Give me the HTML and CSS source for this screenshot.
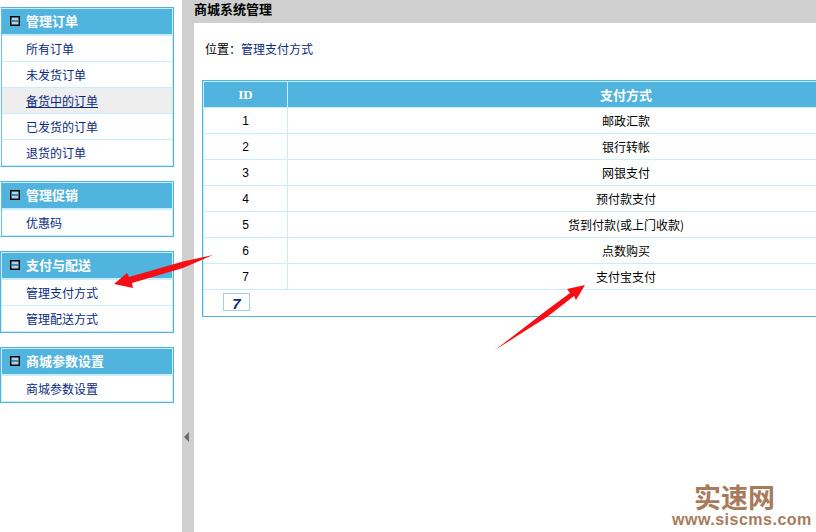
FILE: index.html
```html
<!DOCTYPE html>
<html lang="zh-CN">
<head>
<meta charset="utf-8">
<title>商城系统管理</title>
<link rel="stylesheet" href="styles.css">
</head>
<body>
<div class="page">
  <aside class="sidebar">
    <section class="menu menu-soft">
      <h3 class="menu-head"><svg class="marker" viewBox="0 0 10 10"><rect x="0.75" y="0.75" width="8.5" height="8.5" fill="#a9d6ea" stroke="#000" stroke-width="1.5"/><rect x="2" y="4" width="6" height="2" fill="#3f86b4"/></svg>管理订单</h3>
      <a class="menu-item" href="#">所有订单</a>
      <a class="menu-item" href="#">未发货订单</a>
      <a class="menu-item is-active" href="#">备货中的订单</a>
      <a class="menu-item" href="#">已发货的订单</a>
      <a class="menu-item" href="#">退货的订单</a>
    </section>
    <section class="menu menu-soft">
      <h3 class="menu-head"><svg class="marker" viewBox="0 0 10 10"><rect x="0.75" y="0.75" width="8.5" height="8.5" fill="#a9d6ea" stroke="#000" stroke-width="1.5"/><rect x="2" y="4" width="6" height="2" fill="#3f86b4"/></svg>管理促销</h3>
      <a class="menu-item" href="#">优惠码</a>
    </section>
    <section class="menu">
      <h3 class="menu-head"><svg class="marker" viewBox="0 0 10 10"><rect x="0.75" y="0.75" width="8.5" height="8.5" fill="#a9d6ea" stroke="#000" stroke-width="1.5"/><rect x="2" y="4" width="6" height="2" fill="#3f86b4"/></svg>支付与配送</h3>
      <a class="menu-item" href="#">管理支付方式</a>
      <a class="menu-item" href="#">管理配送方式</a>
    </section>
    <section class="menu">
      <h3 class="menu-head"><svg class="marker" viewBox="0 0 10 10"><rect x="0.75" y="0.75" width="8.5" height="8.5" fill="#a9d6ea" stroke="#000" stroke-width="1.5"/><rect x="2" y="4" width="6" height="2" fill="#3f86b4"/></svg>商城参数设置</h3>
      <a class="menu-item" href="#">商城参数设置</a>
    </section>
  </aside>
  <div class="workspace">
    <span class="collapse-arrow"></span>
    <h1 class="top-title">商城系统管理</h1>
    <main class="content">
      <p class="crumb">位置：<a href="#">管理支付方式</a></p>
      <div class="table-box">
        <table class="pay-table">
          <thead>
            <tr><th class="col-id">ID</th><th>支付方式</th></tr>
          </thead>
          <tbody>
            <tr><td class="col-id">1</td><td>邮政汇款</td></tr>
            <tr><td class="col-id">2</td><td>银行转帐</td></tr>
            <tr><td class="col-id">3</td><td>网银支付</td></tr>
            <tr><td class="col-id">4</td><td>预付款支付</td></tr>
            <tr><td class="col-id">5</td><td>货到付款(或上门收款)</td></tr>
            <tr><td class="col-id">6</td><td>点数购买</td></tr>
            <tr><td class="col-id">7</td><td>支付宝支付</td></tr>
          </tbody>
        </table>
        <div class="pager"><a class="page-num" href="#">7</a></div>
      </div>
    </main>
  </div>
  <svg class="arrows" viewBox="0 0 816 532" aria-hidden="true">
    <polygon points="114,284 127,273 129,277 183,261.5 213,255 183,268 132,283 133,288" fill="#f50f14"/>
    <polygon points="585,285 567,289 570,293 547,310 495,350 547,317 574,296 576,300" fill="#f50f14"/>
  </svg>
  <div class="watermark">
    <div class="wm-name">实速网</div>
    <div class="wm-url">www.siscms.com</div>
  </div>
</div>
</body>
</html>
```
FILE: styles.css
```css
* { box-sizing: border-box; }
html, body { margin: 0; padding: 0; height: 100%; overflow: hidden; background: #fff; }
body { font: 12px/18px "Noto Sans CJK SC", "Liberation Sans", sans-serif; color: #000; }
a { color: #0a2a7e; text-decoration: none; }

.page { position: relative; display: flex; width: 816px; height: 532px; overflow: hidden; }

.sidebar { flex: 0 0 182px; padding-top: 7px; display: flex; flex-direction: column; gap: 14px; }
.menu { width: 174px; border: 1px solid #51b4de; background: #fff; box-shadow: inset 1px 1px 0 #c8eefb, inset -1px 0 0 #c8eefb; padding: 1px 1px 0; }
.menu-soft { border-left-color: #fff; box-shadow: inset 1px 0 0 #62c2ea, inset 0 1px 0 #c8eefb, inset -1px 0 0 #c8eefb; }
.menu-head { display: flex; align-items: center; gap: 6px; height: 27px; margin: 0; padding: 0 0 2px 8px; font-size: 13px; font-weight: bold; line-height: 25px; color: #fff; background: #51b4de; border-bottom: 2px solid #c8eefb; }
.marker { width: 10px; height: 10px; flex: none; }
.menu-item { display: block; height: 26px; padding-left: 24px; line-height: 25px; border-bottom: 1px solid #c8eefb; }
.menu-item.is-active { background: #eeeeee; text-decoration: underline; }

.workspace { position: relative; flex: 1; min-width: 0; display: flex; flex-direction: column; padding-left: 12px; background: #cfcfcf; }
.collapse-arrow { position: absolute; left: 2px; top: 432px; width: 0; height: 0; border-style: solid; border-width: 5px 5px 5px 0; border-color: transparent #6a6a72 transparent transparent; }
.top-title { height: 23px; margin: 0; font-size: 13px; font-weight: bold; line-height: 18px; color: #000; }
.content { flex: 1; background: #fff; padding: 17px 0 0 8px; overflow: hidden; }
.crumb { margin: 0 0 22px 3px; height: 18px; }

.table-box { width: 764px; border: 1px solid #51b4de; padding: 1px 1px 0; box-shadow: inset 1px 1px 0 #c8eefb; }
.pay-table { width: 100%; border-collapse: separate; border-spacing: 0; table-layout: fixed; }
.pay-table th, .pay-table td { height: 26px; padding: 0; text-align: center; font-weight: normal; border-bottom: 1px solid #c8eefb; }
.pay-table th { font-size: 13px; font-weight: bold; color: #fff; background: #51b4de; }
.pay-table .col-id { width: 84px; border-right: 1px solid #c8eefb; }
.pay-table th.col-id { font-family: "Liberation Serif", serif; }
.pay-table td.col-id { font-family: "Liberation Sans", sans-serif; }
.pager { height: 26px; padding: 3px 0 0 19px; }
.page-num { display: block; width: 27px; height: 18px; border: 1px solid #a5cfe6; text-align: center; font: italic bold 15px/20px "Liberation Sans", sans-serif; }

.arrows { position: absolute; left: 0; top: 0; width: 816px; height: 532px; pointer-events: none; }

.watermark { position: absolute; left: 672px; top: 482px; width: 144px; color: #a87b5c; font-weight: bold; }
.wm-name { height: 30px; padding-left: 22px; font-size: 27px; line-height: 30px; }
.wm-url { font: bold 16px/16px "Liberation Sans", sans-serif; letter-spacing: 0.5px; white-space: nowrap; }
```
